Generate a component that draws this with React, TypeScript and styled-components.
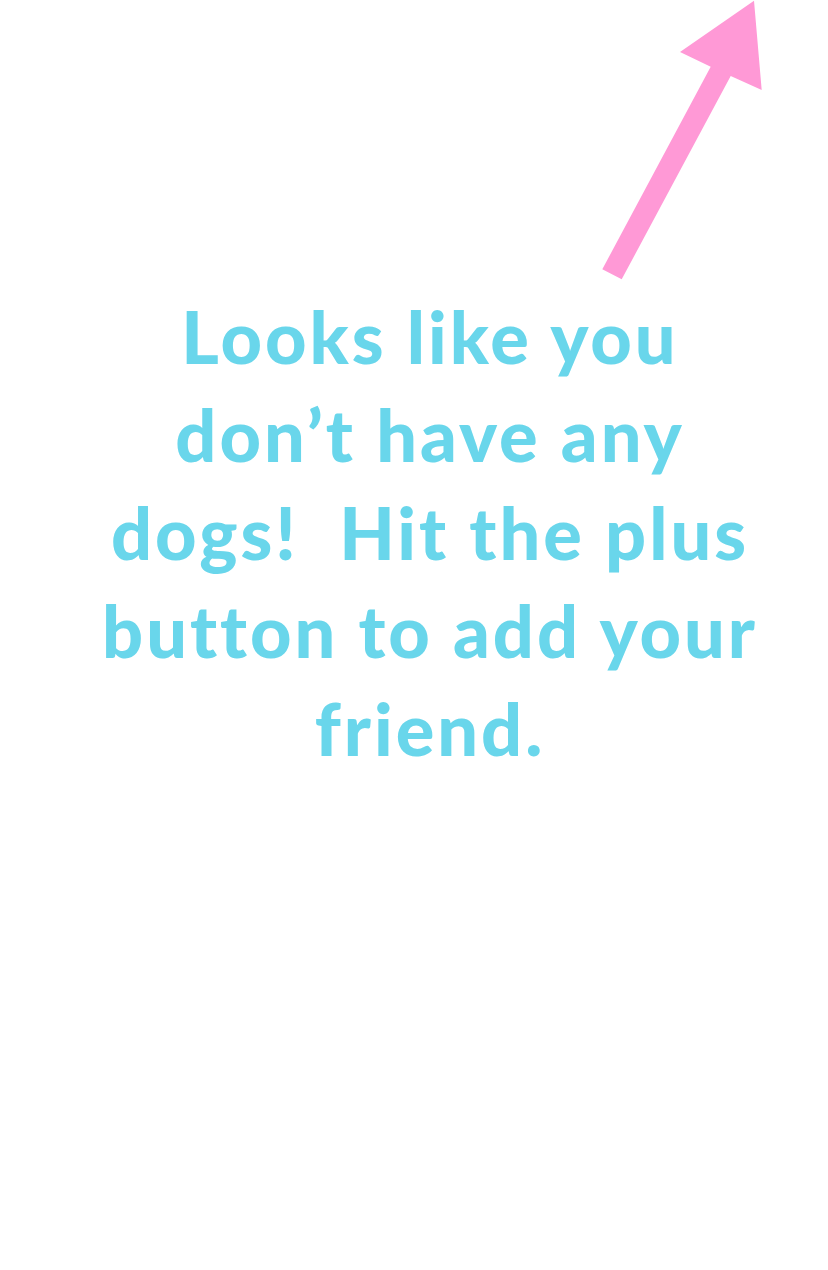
import React from "react";
import styled, { createGlobalStyle } from "styled-components";

const Global = createGlobalStyle`
  html, body { margin: 0; padding: 0; background: #ffffff; }
  body { font-family: "Lato", "Liberation Sans", sans-serif; }
`;

const Page = styled.div`
  width: 828px;
  height: 1270px;
  background: #ffffff;
  display: flex;
  flex-direction: column;
  overflow: hidden;
`;

const Header = styled.div`
  display: flex;
  justify-content: flex-end;
  padding-right: 64px;
  height: 287px;
`;

const Message = styled.p`
  margin: 0;
  padding: 0 64px 0 96px;
  text-align: center;
  color: #69d6eb;
  font-family: "Lato", "Liberation Sans", sans-serif;
  font-weight: 900;
  font-size: 72px;
  line-height: 98px;
  letter-spacing: 3px;
  font-variant-ligatures: none;
  font-feature-settings: "liga" 0;
`;

const Arrow = () => (
  <svg width="164" height="282" viewBox="600 0 164 282">
    <polygon
      fill="#ff99d6"
      points="754,0.7 761.7,90 730.7,76 621.7,279.3 602.3,269.3 710.7,66.7 680,52"
    />
  </svg>
);

export default function App() {
  return (
    <Page>
      <Global />
      <Header>
        <Arrow />
      </Header>
      <Message>
        Looks like you don’t have any dogs!&nbsp; Hit the plus button to add your friend.
      </Message>
    </Page>
  );
}
